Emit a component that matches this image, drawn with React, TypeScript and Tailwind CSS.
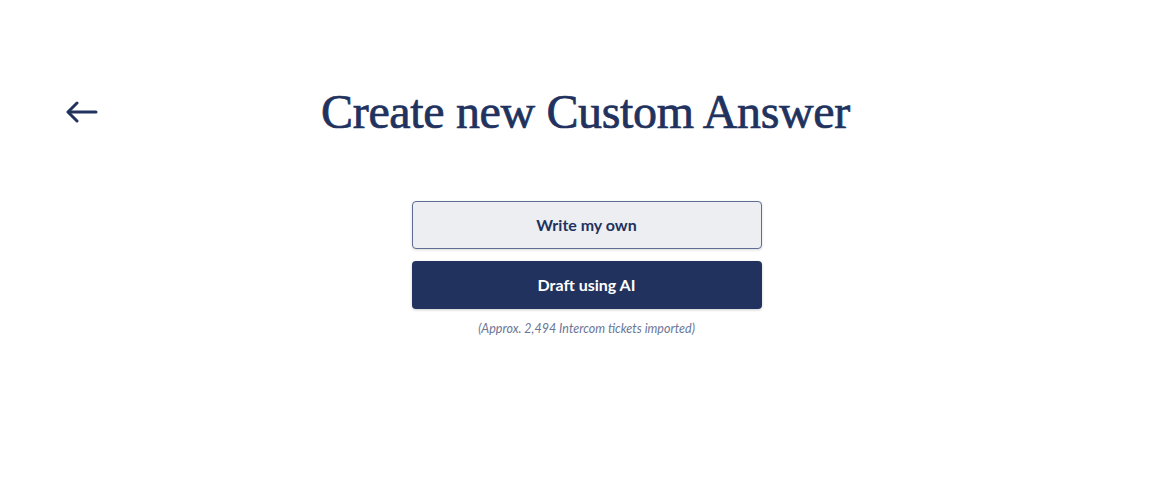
export default function App() {
  return (
    <div className="min-h-[482px] w-full bg-white font-['Lato','Liberation_Sans',sans-serif]">
      <div className="grid grid-cols-[1fr_auto_1fr] items-center px-[66px] pt-[82px]">
        <button type="button" aria-label="Back" className="justify-self-start text-[#21325e]">
          <svg width="32" height="24" viewBox="0 0 32 24" fill="none" stroke="currentColor" strokeWidth="3" strokeLinecap="round" strokeLinejoin="round">
            <path d="M30 12H3" />
            <path d="M11 3L2 12l9 9" />
          </svg>
        </button>
        <h1 className="font-['Liberation_Serif',serif] text-[48px] leading-[60px] tracking-[-0.35px] text-[#21325e] [-webkit-text-stroke:0.7px_#21325e]">
          Create new Custom Answer
        </h1>
        <div />
      </div>

      <div className="ml-[2px] mt-[59px] flex flex-col items-center">
        <button
          type="button"
          className="h-[48px] w-[350px] rounded-[4px] border border-[#5f6d95] bg-[#eceef2] text-[16px] font-bold text-[#21325e] shadow-[0_1px_3px_rgba(0,0,0,0.15)]"
        >
          Write my own
        </button>
        <button
          type="button"
          className="mt-[12px] h-[48px] w-[350px] rounded-[4px] bg-[#21325e] text-[16px] font-bold text-white shadow-[0_1px_3px_rgba(0,0,0,0.2)]"
        >
          Draft using AI
        </button>
        <p className="mt-[11px] text-[12.5px] italic text-[#6b7696]">
          (Approx. 2,494 Intercom tickets imported)
        </p>
      </div>
    </div>
  );
}
